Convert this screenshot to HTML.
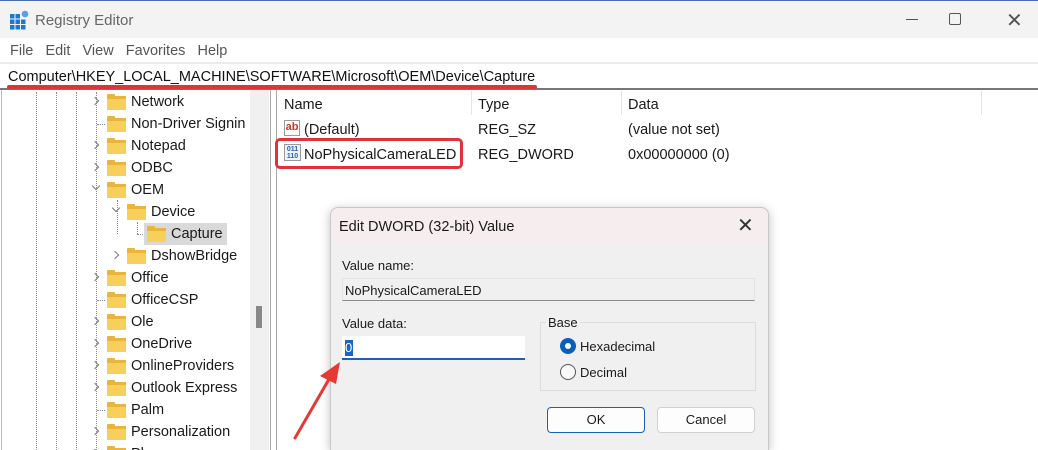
<!DOCTYPE html>
<html style="overflow:hidden"><head><meta charset="utf-8"><style>
*{margin:0;padding:0;box-sizing:border-box}
html,body{width:1038px;height:450px;overflow:hidden}
body{background:#fff;font-family:"Liberation Sans",sans-serif;font-size:14.5px;color:#1a1a1a;position:relative}
.a{position:absolute;white-space:nowrap}
.fold{position:absolute;width:19px;height:14px;background:#f8cf5a;border-top:3px solid #e9b53c}
.fold:before{content:"";position:absolute;left:0;top:-5px;width:8px;height:3px;background:#e9b53c;border-radius:1px 1px 0 0}
.chev{position:absolute;width:6px;height:6px;border-right:1.3px solid #777;border-bottom:1.3px solid #777}
.r{transform:rotate(-45deg)}
.d{transform:rotate(45deg)}
.vd{position:absolute;border-left:1px dotted #888}
.hd{position:absolute;border-top:1px dotted #888}
</style></head><body>
<div class="a" style="left:0;top:0;width:1038px;height:38px;background:#f3f3f3;border-top:1px solid #4a6fb0"></div>
<svg class="a" style="left:10px;top:10px" width="20" height="20" viewBox="0 0 20 20"><g fill="#1e78d2"><rect x="0" y="4" width="4.5" height="4.5"/><rect x="5.5" y="4" width="4.5" height="4.5"/><rect x="0" y="9.5" width="4.5" height="4.5"/><rect x="5.5" y="9.5" width="4.5" height="4.5"/><rect x="11" y="9.5" width="4.5" height="4.5"/><rect x="0" y="15" width="4.5" height="4.5"/><rect x="5.5" y="15" width="4.5" height="4.5"/><rect x="11" y="15" width="4.5" height="4.5"/></g><circle cx="15" cy="4" r="3.3" fill="#5aa0e6"/></svg>
<div class="a" style="left:35px;top:12px;font-size:15px;color:#666">Registry Editor</div>
<div class="a" style="left:906px;top:19px;width:12px;border-top:1px solid #555"></div>
<div class="a" style="left:949px;top:13px;width:12px;height:12px;border:1px solid #555;border-radius:2px"></div>
<div class="a" style="left:1006px;top:8px;font-size:20px;color:#555">✕</div>
<div class="a" style="left:10px;top:43px;color:#555;word-spacing:0">File&nbsp;&nbsp;&nbsp;Edit&nbsp;&nbsp;&nbsp;View&nbsp;&nbsp;&nbsp;Favorites&nbsp;&nbsp;&nbsp;Help</div>
<div class="a" style="left:0;top:62px;width:1038px;height:2px;background:#ebebeb"></div>
<div class="a" style="left:8px;top:69px;font-size:14.5px;color:#111">Computer\HKEY_LOCAL_MACHINE\SOFTWARE\Microsoft\OEM\Device\Capture</div>
<div class="a" style="left:0;top:88px;width:1038px;height:2px;background:#777"></div>
<div class="a" style="left:7px;top:85px;width:530px;height:4px;background:#e0323a;border-radius:2px"></div>
<div class="a" style="left:1px;top:90px;width:1px;height:360px;background:#bbb"></div>
<div class="a" style="left:250px;top:90px;width:19px;height:360px;background:#f0f0f0"></div>
<div class="a" style="left:256px;top:306px;width:6px;height:22px;background:#888"></div>
<div class="a" style="left:270px;top:90px;width:1px;height:360px;background:#aaa"></div>
<div class="a" style="left:276px;top:90px;width:1px;height:360px;background:#aaa"></div>
<div class="vd" style="left:36px;top:92px;height:358px"></div>
<div class="vd" style="left:56px;top:92px;height:358px"></div>
<div class="vd" style="left:76px;top:92px;height:358px"></div>
<div class="vd" style="left:96px;top:92px;height:358px"></div>
<div class="vd" style="left:117px;top:200px;height:34px"></div>
<div class="hd" style="left:137px;top:234px;width:8px"></div>
<div class="vd" style="left:137px;top:222px;height:12px"></div>
<div class="hd" style="left:97px;top:124px;width:8px"></div>
<div class="hd" style="left:97px;top:300px;width:8px"></div>
<div class="hd" style="left:97px;top:410px;width:8px"></div>
<div class="a" style="left:144px;top:223px;width:83px;height:22px;background:#d9d9d9"></div>
<div id="tree"></div>
<div class="a" style="left:284px;top:97px">Name</div>
<div class="a" style="left:471px;top:91px;width:1px;height:24px;background:#e5e5e5"></div>
<div class="a" style="left:478px;top:97px">Type</div>
<div class="a" style="left:621px;top:91px;width:1px;height:24px;background:#e5e5e5"></div>
<div class="a" style="left:628px;top:97px">Data</div>
<div class="a" style="left:981px;top:91px;width:1px;height:24px;background:#e5e5e5"></div>
<div class="a" style="left:284px;top:120px;width:16px;height:16px;border:1px solid #999;background:#fff;font-size:11px;font-weight:bold;color:#d2371e;line-height:12px;text-align:center">ab</div>
<div class="a" style="left:304px;top:122px">(Default)</div>
<div class="a" style="left:478px;top:122px">REG_SZ</div>
<div class="a" style="left:628px;top:122px">(value not set)</div>
<div class="a" style="left:275px;top:138px;width:188px;height:31px;border:3px solid #e0323a;border-radius:5px"></div>
<div class="a" style="left:284px;top:144px;width:17px;height:17px;border:1px solid #999;background:#eef2fa;font-size:7px;font-weight:bold;color:#2a5db0;line-height:7px;text-align:center;padding-top:1px">011<br>110</div>
<div class="a" style="left:304px;top:147px">NoPhysicalCameraLED</div>
<div class="a" style="left:478px;top:147px">REG_DWORD</div>
<div class="a" style="left:628px;top:147px">0x00000000 (0)</div>
<div class="a" style="left:330px;top:207px;width:439px;height:243px;background:#f0f0f0;border:1px solid #c8c8c8;border-bottom:none;border-radius:8px 8px 0 0;box-shadow:0 2px 10px rgba(0,0,0,.25)"></div>
<div class="a" style="left:331px;top:208px;width:437px;height:35px;background:#f6eeee;border-radius:8px 8px 0 0"></div>
<div class="a" style="left:339px;top:219px;font-size:14.5px">Edit DWORD (32-bit) Value</div>
<div class="a" style="left:737px;top:213px;font-size:20px;color:#333">✕</div>
<div class="a" style="left:342px;top:258px;font-size:13px">Value name:</div>
<div class="a" style="left:342px;top:278px;width:413px;height:23px;background:#f0f0f0;border:1px solid #e2e2e2;border-bottom:1px solid #8a8a8a"></div>
<div class="a" style="left:345px;top:283px;font-size:13px">NoPhysicalCameraLED</div>
<div class="a" style="left:342px;top:316px;font-size:13px">Value data:</div>
<div class="a" style="left:342px;top:336px;width:183px;height:24px;background:#fff;border-bottom:2px solid #1961b6"></div>
<div class="a" style="left:345px;top:340px;width:8px;height:16px;background:#1a63c9;color:#fff;font-size:13px;line-height:16px">0</div>
<div class="a" style="left:540px;top:322px;width:216px;height:69px;border:1px solid #dcdcdc"></div>
<div class="a" style="left:546px;top:315px;font-size:13px;background:#f0f0f0;padding:0 2px">Base</div>
<div class="a" style="left:560px;top:338px;width:16px;height:16px;border-radius:50%;background:#0a5fb8"></div>
<div class="a" style="left:565px;top:343px;width:6px;height:6px;border-radius:50%;background:#fff"></div>
<div class="a" style="left:580px;top:339px;font-size:13px">Hexadecimal</div>
<div class="a" style="left:560px;top:364px;width:16px;height:16px;border-radius:50%;border:1px solid #555;background:#f8f8f8"></div>
<div class="a" style="left:580px;top:365px;font-size:13px">Decimal</div>
<div class="a" style="left:547px;top:407px;width:98px;height:26px;background:#fdfdfd;border:1px solid #1961b6;border-radius:4px;text-align:center;line-height:24px;font-size:13px">OK</div>
<div class="a" style="left:657px;top:407px;width:98px;height:26px;background:#fdfdfd;border:1px solid #d0d0d0;border-radius:4px;text-align:center;line-height:24px;font-size:13px">Cancel</div>
<svg class="a" style="left:280px;top:350px" width="70" height="100"><line x1="15" y1="88" x2="52" y2="24" stroke="#e53935" stroke-width="3" stroke-linecap="round"/><polygon points="60,12 40,26 56,34" fill="#e53935"/></svg>
<script>
var rows=[["Network",102,1,1],["Non-Driver Signin",124,1,0],["Notepad",146,1,1],["ODBC",168,1,1],["OEM",190,1,2],["Device",212,2,2],["Capture",234,3,0],["DshowBridge",256,2,1],["Office",278,1,1],["OfficeCSP",300,1,0],["Ole",322,1,1],["OneDrive",344,1,1],["OnlineProviders",366,1,1],["Outlook Express",388,1,1],["Palm",410,1,0],["Personalization",432,1,1],["Phone",454,1,1]];
var h="";rows.forEach(function(r){var x=107+(r[2]-1)*20,y=r[1];
if(r[3]==1)h+='<div class="chev r" style="left:'+(x-15)+'px;top:'+(y-4)+'px"></div>';
if(r[3]==2)h+='<div class="chev d" style="left:'+(x-14)+'px;top:'+(y-7)+'px"></div>';
h+='<div class="fold" style="left:'+x+'px;top:'+(y-6)+'px"></div>';
h+='<div class="a" style="left:'+(x+24)+'px;top:'+(y-8)+'px;width:'+(250-x-24)+'px;overflow:hidden">'+r[0]+'</div>';});
document.getElementById("tree").innerHTML=h;
</script>
</body></html>
